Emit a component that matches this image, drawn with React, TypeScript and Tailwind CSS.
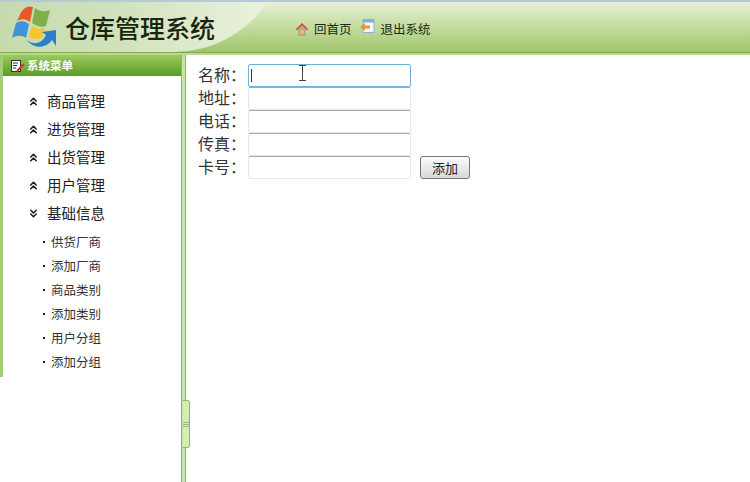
import { ChevronsDown, ChevronsUp } from "lucide-react";

const cjk = "font-['Noto_Sans_CJK_SC','Noto_Sans_CJK_JP',sans-serif]";

const closedMenus = ["商品管理", "进货管理", "出货管理", "用户管理"];
const subMenus = ["供货厂商", "添加厂商", "商品类别", "添加类别", "用户分组", "添加分组"];
const fields = ["名称", "地址", "电话", "传真", "卡号"];

function Logo() {
  return (
    <svg width="46" height="46" viewBox="0 0 46 46" className="shrink-0">
      <path d="M7 13 C10 5 15 1 21 3 L18 18 C14 15 10 14 5 17 Z" fill="#e8582a" />
      <path d="M23 4 C28 8 33 8 38 6 L34 22 C29 24 25 22 20 19 Z" fill="#7fb04a" />
      <path d="M4 19 C9 16 13 17 17 20 L14 34 C9 31 5 31 0 34 Z" fill="#3f93d8" />
      <path d="M20 22 C24 25 28 26 33 24 L30 34 C26 36 22 35 17 33 Z" fill="#f5c52c" />
      <path d="M15 36 C23 42 30 39 34 31 L30 28 L44 26 L44 42 L40 36 C34 45 21 45 15 36 Z" fill="#2f7fc8" />
    </svg>
  );
}

function HomeIcon() {
  return (
    <svg width="14" height="15" viewBox="0 0 14 15">
      <path d="M0.5 7.5 L7 1 L13.5 7.5 L11.5 8 L7 3.5 L2.5 8 Z" fill="#d8453a" />
      <path d="M3 7.5 L7 4 L11 7.5 V14 H3 Z" fill="#b7a690" />
      <rect x="5" y="8.5" width="4" height="3" fill="#f0c050" />
    </svg>
  );
}

function ExitIcon() {
  return (
    <svg width="15" height="15" viewBox="0 0 15 15">
      <rect x="3" y="0.5" width="11" height="13" fill="#f4f7fb" stroke="#8fb4d8" />
      <rect x="3" y="0.5" width="11" height="3" fill="#7fb0dc" />
      <path d="M0 8 L5 4 L5 6.5 L10 6.5 L10 9.5 L5 9.5 L5 12 Z" fill="#ee9433" />
    </svg>
  );
}

function EditIcon() {
  return (
    <svg width="14" height="12" viewBox="0 0 14 12" className="shrink-0">
      <rect x="0.5" y="0.5" width="9" height="11" fill="#fff" stroke="#333" />
      <path d="M2 3 H7 M2 5.5 H6 M2 8 H5" stroke="#333" />
      <path d="M6 9.5 L12 3.5 L13.5 5 L7.5 11 L5.5 11.5 Z" fill="#c9382f" />
    </svg>
  );
}

function Header() {
  return (
    <header className="relative flex h-[52px] shrink-0 items-center overflow-hidden border-t-2 border-[#b5c9da] bg-gradient-to-b from-[#e6f0d6] via-[#c4dc9f] to-[#9fc66a]">
      {/* light swoosh behind the logo */}
      <div className="absolute -left-[40px] -top-[62px] h-[112px] w-[326px] rounded-br-[190px] bg-gradient-to-r from-[#c3d8a8] via-[#d2e2bd] to-[#eef5e2]" />
      <div className="relative flex items-center pl-[12px]">
        <Logo />
        <h1 className={`ml-[7px] text-[25px] font-medium leading-none text-[#17260f] ${cjk}`}>
          仓库管理系统
        </h1>
        <nav className={`ml-[80px] mt-[4px] flex items-center text-[12.5px] text-[#1d2a12] ${cjk}`}>
          <HomeIcon />
          <span className="ml-[5px]">回首页</span>
          <span className="ml-[8px] -mt-[6px]">
            <ExitIcon />
          </span>
          <span className="ml-[6px]">退出系统</span>
        </nav>
      </div>
    </header>
  );
}

function Sidebar() {
  return (
    <aside className={`w-[181px] shrink-0 ${cjk}`}>
      <div className="h-[322px] border-l-[3px] border-[#a3cc7a] bg-white">
        <div className="flex h-[21px] items-center gap-[2px] bg-gradient-to-b from-[#9ccb5c] to-[#5c9a22] pl-[8px] text-[11.5px] font-bold text-white">
          <EditIcon />
          <span>系统菜单</span>
        </div>
        <ul className="pt-[11px] text-[14.5px] text-[#222]">
          {closedMenus.map((name) => (
            <li key={name} className="flex h-[28px] items-center pl-[24px]">
              <ChevronsUp size={13} strokeWidth={3} />
              <span className="ml-[7px]">{name}</span>
            </li>
          ))}
          <li className="flex h-[28px] items-center pl-[24px]">
            <ChevronsDown size={13} strokeWidth={3} />
            <span className="ml-[7px]">基础信息</span>
          </li>
        </ul>
        <ul className="pt-[3px] text-[12.5px] text-[#333]">
          {subMenus.map((name) => (
            <li key={name} className="flex h-[24px] items-center pl-[40px]">
              <span className="h-[2px] w-[2px] bg-[#222]" />
              <span className="ml-[6px]">{name}</span>
            </li>
          ))}
        </ul>
      </div>
    </aside>
  );
}

function Divider() {
  return (
    <div className="relative w-[5px] shrink-0 border-x border-[#8db56a] bg-[#c8e4a0]">
      {/* collapse handle */}
      <div className="absolute left-[1px] top-[345px] flex h-[48px] w-[7px] flex-col justify-center gap-[1px] rounded-r-[3px] border-y border-r border-[#8db56a] bg-[#d4eeb0]">
        <span className="h-px bg-[#9db58a]" />
        <span className="h-px bg-[#9db58a]" />
        <span className="h-px bg-[#9db58a]" />
      </div>
    </div>
  );
}

function ShopForm() {
  return (
    <form className={`pl-[12px] pt-[9px] text-[16px] text-[#333] ${cjk}`}>
      {fields.map((label, i) => (
        <div key={label} className="flex h-[23px] items-center">
          <label className="w-[50px] pb-[3px] leading-none">{label}：</label>
          <div className="relative">
            <input
              type="text"
              aria-label={label}
              className={
                i === 0
                  ? "block h-[23px] w-[163px] rounded-[2px] border border-[#6fb0d8] bg-white"
                  : "block h-[23px] w-[163px] rounded-[2px] border border-[#e4e8ec] border-t-[#a9a9a9] bg-white"
              }
            />
            {i === 0 && (
              <>
                <span className="absolute left-[3px] top-[5px] h-[13px] w-px bg-[#333]" />
                <svg width="9" height="16" viewBox="0 0 9 16" className="absolute left-[50px] top-[1px]">
                  <path d="M1 0.5 H8 M4.5 0.5 V15.5 M1 15.5 H8" stroke="#444" fill="none" />
                </svg>
              </>
            )}
          </div>
          {i === 4 && (
            <button
              type="button"
              className="ml-[9px] h-[23px] w-[50px] rounded-[3px] border border-[#777] bg-gradient-to-b from-[#fbfbfb] to-[#d9d9d9] text-[13px] leading-none text-[#222]"
            >
              添加
            </button>
          )}
        </div>
      ))}
    </form>
  );
}

export default function App() {
  return (
    <div className="flex h-[482px] w-[750px] flex-col overflow-hidden bg-white">
      <Header />
      <div className="h-[3px] shrink-0 border-t border-[#7fae4c] bg-[#b9d79a]" />
      <main className="flex min-h-0 flex-1">
        <Sidebar />
        <Divider />
        <div className="min-w-0 flex-1">
          <ShopForm />
        </div>
      </main>
    </div>
  );
}
